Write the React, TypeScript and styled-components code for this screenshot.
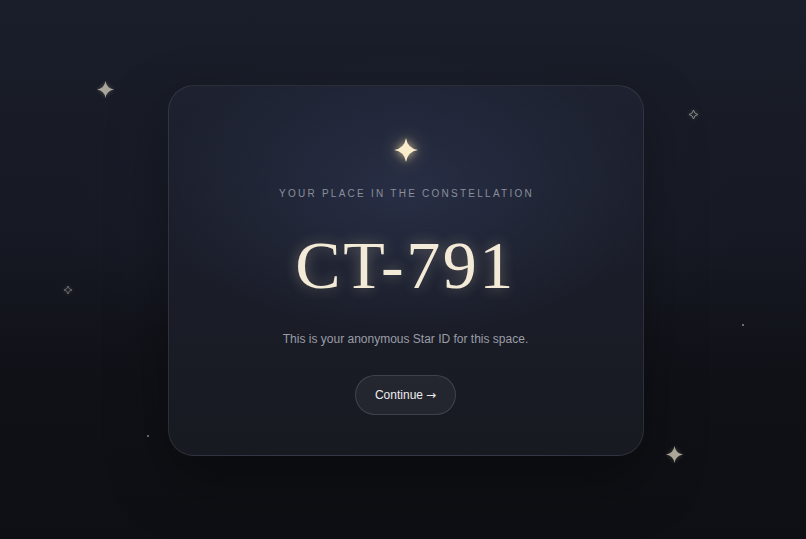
import styled, { createGlobalStyle } from "styled-components";

const GlobalStyle = createGlobalStyle`
  html, body {
    margin: 0;
    padding: 0;
    height: 100%;
  }
  body {
    background: #12141b;
    font-family: "Liberation Sans", Arial, sans-serif;
  }
`;

const STAR_PATH =
  "M12 0 Q13.6 10.4 24 12 Q13.6 13.6 12 24 Q10.4 13.6 0 12 Q10.4 10.4 12 0 Z";

interface SparkProps {
  x: number;
  y: number;
  size: number;
  hollow?: boolean;
  color?: string;
}

// decorative sparkles scattered over the sky
function Spark({ x, y, size, hollow, color = "#a9a598" }: SparkProps) {
  return (
    <Decoration
      style={{ left: x - size / 2, top: y - size / 2, width: size, height: size }}
    >
      <svg viewBox="0 0 24 24" width={size} height={size}>
        <path
          d={STAR_PATH}
          fill={hollow ? "none" : color}
          stroke={hollow ? color : "none"}
          strokeWidth={hollow ? 2.6 : 0}
          strokeLinejoin="round"
        />
      </svg>
    </Decoration>
  );
}

function Dot({ x, y }: { x: number; y: number }) {
  return <DotMark style={{ left: x - 1, top: y - 1 }} />;
}

export default function App() {
  return (
    <>
      <GlobalStyle />
      <Page>
        <Spark x={105} y={89} size={17} />
        <Spark x={693} y={114} size={9} hollow color="#8d8c88" />
        <Spark x={68} y={290} size={8} hollow color="#77777a" />
        <Spark x={674} y={454} size={17} color="#b3ad9e" />
        <Dot x={743} y={325} />
        <Dot x={148} y={436} />

        <Card>
          <HeroStar>
            <svg viewBox="0 0 24 24" width={24} height={24}>
              <path d={STAR_PATH} fill="#fbeccb" />
            </svg>
          </HeroStar>
          <Eyebrow>Your place in the constellation</Eyebrow>
          <StarId>CT-791</StarId>
          <Caption>This is your anonymous Star ID for this space.</Caption>
          <ContinueButton type="button">
            Continue <Arrow>→</Arrow>
          </ContinueButton>
        </Card>
      </Page>
    </>
  );
}

const Page = styled.main`
  position: relative;
  min-height: 100vh;
  display: flex;
  align-items: center;
  justify-content: center;
  overflow: hidden;
  background:
    radial-gradient(ellipse 60% 45% at 50% 40%, rgba(40, 48, 72, 0.3), transparent 70%),
    linear-gradient(180deg, #1a1e2a 0%, #161923 45%, #101117 70%, #0e0f14 100%);
`;

const Decoration = styled.div`
  position: absolute;
  display: flex;
  filter: drop-shadow(0 0 2px rgba(240, 230, 200, 0.25));
`;

const DotMark = styled.span`
  position: absolute;
  width: 2px;
  height: 2px;
  border-radius: 50%;
  background: #8d8d90;
`;

const Card = styled.section`
  position: relative;
  box-sizing: border-box;
  width: 476px;
  height: 371px;
  margin: 2px 0 0 5px;
  padding: 52px 24px 0;
  display: flex;
  flex-direction: column;
  align-items: center;
  border-radius: 26px;
  border: 1px solid rgba(255, 255, 255, 0.09);
  background:
    radial-gradient(ellipse 70% 55% at 50% 28%, rgba(44, 52, 78, 0.72), transparent 75%),
    linear-gradient(180deg, #1d2130 0%, #1a1d28 55%, #181a21 100%);
  box-shadow: 0 24px 60px rgba(0, 0, 0, 0.35);
`;

const HeroStar = styled.div`
  display: flex;
  filter: drop-shadow(0 0 4px rgba(255, 230, 170, 0.75))
    drop-shadow(0 0 10px rgba(255, 225, 160, 0.35));
`;

const Eyebrow = styled.p`
  margin: 25px 0 0;
  padding-left: 2px;
  font-size: 10px;
  line-height: 14px;
  letter-spacing: 2.25px;
  text-transform: uppercase;
  color: #8a8e9b;
`;

const StarId = styled.h1`
  margin: 24px 0 0;
  font-family: "Liberation Serif", "Times New Roman", serif;
  font-weight: 400;
  font-size: 68px;
  line-height: 80px;
  letter-spacing: 2.5px;
  color: #f3ebd7;
  text-shadow: 0 0 14px rgba(255, 235, 190, 0.35);
`;

const Caption = styled.p`
  margin: 26px 0 0;
  font-size: 12px;
  line-height: 16px;
  color: #9b9da7;
`;

const ContinueButton = styled.button`
  margin-top: 28px;
  height: 40px;
  padding: 0 19px;
  display: flex;
  align-items: center;
  gap: 3px;
  border-radius: 999px;
  border: 1px solid rgba(255, 255, 255, 0.13);
  background: rgba(255, 255, 255, 0.05);
  color: #ecebee;
  font-family: "Liberation Sans", Arial, sans-serif;
  font-size: 12px;
  cursor: pointer;
`;

const Arrow = styled.span`
  font-family: "DejaVu Sans", sans-serif;
  font-size: 12px;
`;
